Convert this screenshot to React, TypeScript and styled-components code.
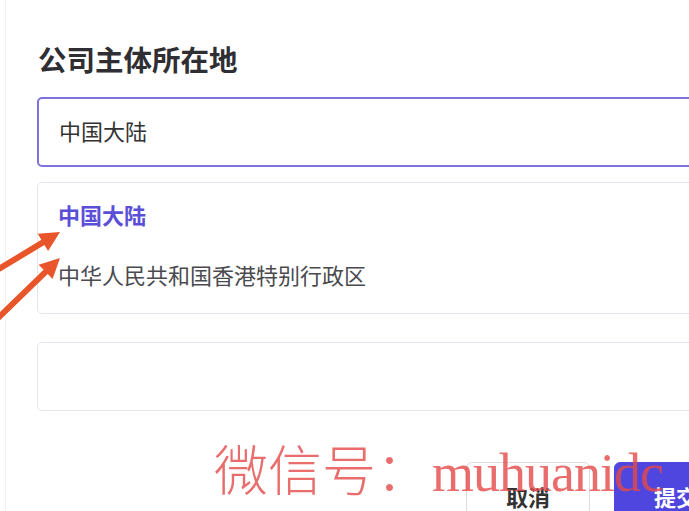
import React from 'react';
import styled, { createGlobalStyle } from 'styled-components';

const GlobalStyle = createGlobalStyle`
  html, body {
    margin: 0;
    padding: 0;
    background: #ffffff;
    overflow: hidden;
  }
  body {
    font-family: "Noto Sans CJK SC", "Noto Sans", sans-serif;
  }
`;

const Page = styled.div`
  position: relative;
  width: 689px;
  height: 511px;
  overflow: hidden;
  background: #fff;
`;

const Panel = styled.div`
  margin-left: 5px;
  height: 100%;
  border-left: 1px solid #f1f1f4;
`;

const Form = styled.div`
  width: 701px;
  padding: 41px 0 0 31px;
  display: flex;
  flex-direction: column;
`;

const Title = styled.h2`
  margin: 0 0 20px 1px;
  font-size: 28.5px;
  line-height: 36px;
  font-weight: 700;
  color: #2f2f33;
`;

const Field = styled.div<{ $active?: boolean }>`
  box-sizing: border-box;
  height: ${p => (p.$active ? 70 : 69)}px;
  border: ${p => (p.$active ? '2px solid #7c72dc' : '1px solid #e6e7ee')};
  border-radius: 5px;
  padding: 0 20px 5px;
  display: flex;
  align-items: center;
  font-size: 22px;
  color: #333;
  background: #fff;
`;

const Dropdown = styled.ul`
  box-sizing: border-box;
  margin: 15px 0 28px 0;
  padding: 1px 0 9px;
  height: 132px;
  list-style: none;
  border: 1px solid #e6e7ee;
  border-radius: 5px;
  background: #fff;
`;

const Option = styled.li<{ $selected?: boolean }>`
  height: 60px;
  padding: 0 20px;
  display: flex;
  align-items: center;
  font-size: 22px;
  font-weight: ${p => (p.$selected ? 700 : 400)};
  color: ${p => (p.$selected ? '#5a4fd6' : '#4a4a4f')};
`;

const Actions = styled.div`
  margin-top: 51px;
  display: flex;
  justify-content: flex-end;
  gap: 24px;
`;

const Button = styled.button<{ $primary?: boolean }>`
  width: 124px;
  height: 68px;
  border-radius: 6px;
  border: 1px solid ${p => (p.$primary ? '#4f46e0' : '#dcdde3')};
  background: ${p => (p.$primary ? '#4f46e0' : '#fff')};
  color: ${p => (p.$primary ? '#fff' : '#333')};
  font-family: "Noto Sans CJK SC", sans-serif;
  font-size: 22px;
  font-weight: 700;
  padding: 0;
`;

const Watermark = styled.div`
  position: absolute;
  left: 214px;
  top: 436px;
  display: flex;
  align-items: baseline;
  color: rgba(228, 72, 72, 0.8);
  font-size: 54px;
  line-height: 64px;
  white-space: nowrap;
  pointer-events: none;
`;

const WmCjk = styled.span`
  font-family: "Noto Sans CJK SC", serif;
  font-weight: 300;
`;

const WmLatin = styled.span`
  font-family: "Liberation Serif", serif;
  letter-spacing: -1px;
  margin-left: 2px;
`;

const Arrows = styled.svg`
  position: absolute;
  left: 0;
  top: 0;
  pointer-events: none;
`;

const Arrow = ({ x1, y1, x2, y2 }: { x1: number; y1: number; x2: number; y2: number }) => {
  const a = Math.atan2(y2 - y1, x2 - x1);
  const len = 20;
  const w = 10;
  const bx = x2 - len * Math.cos(a);
  const by = y2 - len * Math.sin(a);
  const px = -Math.sin(a) * w;
  const py = Math.cos(a) * w;
  return (
    <g>
      <line x1={x1} y1={y1} x2={bx} y2={by} stroke="#e8552a" strokeWidth={6} strokeLinecap="round" />
      <polygon points={`${x2},${y2} ${bx + px},${by + py} ${bx - px},${by - py}`} fill="#e8552a" />
    </g>
  );
};

export default function App() {
  return (
    <Page>
      <GlobalStyle />
      <Panel>
        <Form>
          <Title>公司主体所在地</Title>
          <Field $active>中国大陆</Field>
          <Dropdown>
            <Option $selected>中国大陆</Option>
            <Option>中华人民共和国香港特别行政区</Option>
          </Dropdown>
          <Field />
          <Actions>
            <Button>取消</Button>
            <Button $primary>提交</Button>
          </Actions>
        </Form>
      </Panel>
      <Arrows width="689" height="511">
        <Arrow x1={-6} y1={272} x2={60} y2={232} />
        <Arrow x1={-6} y1={322} x2={60} y2={258} />
      </Arrows>
      <Watermark>
        <WmCjk>微信号：</WmCjk>
        <WmLatin>muhuanidc</WmLatin>
      </Watermark>
    </Page>
  );
}
